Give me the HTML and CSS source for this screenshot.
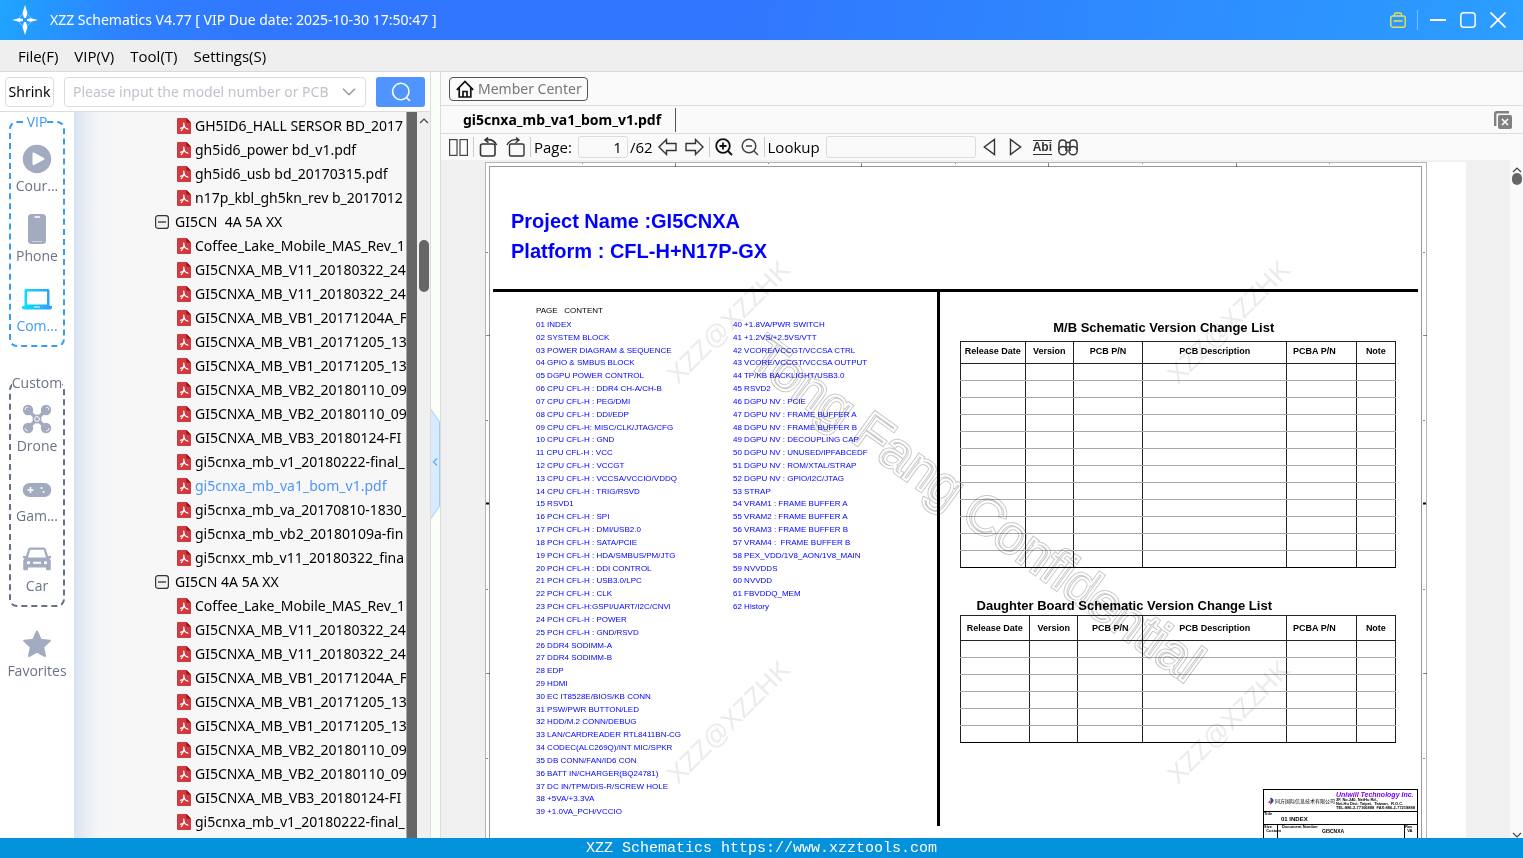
FILE: index.html
```html
<!DOCTYPE html>
<html lang="en">
<head>
<meta charset="utf-8">
<title>XZZ Schematics</title>
<link rel="stylesheet" href="styles.css">
</head>
<body>
<svg class="defs" aria-hidden="true">
  <symbol id="pdf" viewBox="0 0 14 16"><path d="M1 0H9.500L14 4.500V15a1 1 0 0 1-1 1H1a1 1 0 0 1-1-1V1a1 1 0 0 1 1-1z" fill="#d33a40"/><path d="M9.500 0L14 4.500H9.500z" fill="#8f1218"/><path d="M6.700 5.200c.3 2 .6 3.300 1.200 4.200.8 1 1.800 1.500 3 1.700M7.500 9c-1.600.2-2.900.7-4 1.300M6.900 6.500c0 2.300-.8 4.400-2.600 6" fill="none" stroke="#fff" stroke-width="1.200" stroke-linecap="round"/></symbol>
  <symbol id="minus" viewBox="0 0 14 14"><rect x=".6" y=".6" width="12.800" height="12.800" rx="2.500" fill="#f3f0f3" stroke="#333" stroke-width="1.200"/><path d="M3 7h8" stroke="#222" stroke-width="1.200"/></symbol>
</svg>
<div class="app">
  <header class="titlebar">
    <svg class="logo" viewBox="0 0 26 30"><circle cx="13" cy="15" r="6" fill="none" stroke="#7cc6ff" stroke-width="1"/><path d="M13 0l2.500 8-1.500 5h-2l-1.500-5zM13 30l2.500-8-1.500-5h-2l-1.500 5zM0 15l7-1.800 4 .8v2l-4 .8zM26 15l-7-1.800-4 .8v2l4 .8z" fill="#fff"/></svg>
    <h1 class="caption">XZZ Schematics V4.77 [ VIP Due date: 2025-10-30 17:50:47 ]</h1>
    <div class="window-tools">
      <button class="win" aria-label="Toolbox"><svg width="16" height="16" viewBox="0 0 16 16" fill="none" stroke="#e3e34c" stroke-width="1.400"><rect x=".8" y="4" width="14.400" height="11.200" rx="2"/><path d="M4.500 4V2.500A1.500 1.500 0 0 1 6 1h4a1.500 1.500 0 0 1 1.500 1.500V4M3.500 9h9"/></svg></button>
      <span class="win-sep"></span>
      <button class="win" aria-label="Minimize"><svg width="16" height="16" viewBox="0 0 16 16"><path d="M0 8h16" stroke="#fff" stroke-width="2"/></svg></button>
      <button class="win" aria-label="Maximize"><svg width="16" height="16" viewBox="0 0 16 16"><rect x=".8" y=".8" width="14.400" height="14.400" rx="3" fill="none" stroke="#fff" stroke-width="1.500"/></svg></button>
      <button class="win" aria-label="Close"><svg width="16" height="16" viewBox="0 0 16 16"><path d="M.5.5l15 15M15.500.5l-15 15" stroke="#fff" stroke-width="1.700"/></svg></button>
    </div>
  </header>
  <nav class="menubar">
    <button>File(F)</button><button>VIP(V)</button><button>Tool(T)</button><button>Settings(S)</button>
  </nav>
  <main class="main">
    <section class="left">
      <form class="search">
        <button class="shrink" type="button">Shrink</button>
        <div class="combo">
          <input type="text" aria-label="Model number or PCB" placeholder="Please input the model number or PCB">
          <svg width="14" height="8" viewBox="0 0 14 8"><path d="M1 .8l6 6 6-6" fill="none" stroke="#999" stroke-width="1.500"/></svg>
        </div>
        <button class="go" type="button" aria-label="Search"><svg width="20" height="20" viewBox="0 0 20 20" fill="none" stroke="#fff" stroke-width="1.600" stroke-linecap="round"><circle cx="9.800" cy="9.500" r="8.200"/><path d="M15.500 15.500l3 3"/></svg></button>
      </form>
      <div class="left-body">
        <nav class="rail">
          <fieldset class="group vip">
            <legend>VIP</legend>
            <button class="item"><svg viewBox="0 0 30 30"><circle cx="15" cy="15" r="14.200" fill="#a2abc0"/><path d="M10.500 9.500q0-1.500 1.400-.9l10 5.300q1.300.9 0 1.800l-10 5.300q-1.400.6-1.400-.9z" fill="#fff"/></svg>Cour...</button>
            <button class="item"><svg viewBox="0 0 30 30"><rect x="6" y="0" width="18" height="30" rx="3.500" fill="#a2abc0"/><path d="M13 3h4.500" stroke="#fff" stroke-width="1.400" stroke-linecap="round"/><path d="M10 27.500h10" stroke="#cdd3df"/></svg>Phone</button>
            <button class="item on"><svg viewBox="0 0 30 30"><defs><linearGradient id="lap"><stop offset="0" stop-color="#04e6fb"/><stop offset="1" stop-color="#2f9afa"/></linearGradient></defs><path fill="url(#lap)" fill-rule="evenodd" d="M4 5h22a1.500 1.500 0 0 1 1.500 1.500V22H30v1.500a2 2 0 0 1-2 2H2a2 2 0 0 1-2-2V22h2.500V6.500A1.500 1.500 0 0 1 4 5zM5 7.500V20.500H25V7.500zM12 22.500v1h6v-1z"/></svg>Com...</button>
          </fieldset>
          <fieldset class="group custom">
            <legend>Custom</legend>
            <button class="item"><svg viewBox="0 0 30 30"><g fill="#a2abc0"><circle cx="6" cy="6" r="5.200"/><circle cx="24" cy="6" r="5.200"/><circle cx="6" cy="24" r="5.200"/><circle cx="24" cy="24" r="5.200"/><circle cx="15" cy="15" r="4.500"/></g><g fill="none" stroke="#fff" stroke-width=".8"><path d="M3 6a3 3 0 0 1 3-3M27 6a3 3 0 0 0-3-3M3 24a3 3 0 0 0 3 3M27 24a3 3 0 0 1-3 3"/></g><path d="M6 6l18 18M24 6L6 24" stroke="#a2abc0" stroke-width="3.400" stroke-linecap="round"/><circle cx="15" cy="15" r="2.400" fill="none" stroke="#fff"/></svg>Drone</button>
            <button class="item"><svg viewBox="0 0 30 30"><rect x=".8" y="9" width="28.400" height="14" rx="6.500" fill="#a2abc0"/><path d="M5.500 16h6M8.500 13v6" stroke="#fff" stroke-width="1.500"/><circle cx="19.500" cy="14" r="1" fill="#fff"/><circle cx="21.500" cy="18" r="1" fill="#fff"/></svg>Gam...</button>
            <button class="item"><svg viewBox="0 0 30 30"><path fill="#a2abc0" fill-rule="evenodd" d="M8.500 3.500h13a2.500 2.500 0 0 1 2.400 1.800L26 12h3v2l-1.500.6q1.300 1.200 1.300 3V25a1.200 1.200 0 0 1-1.200 1.200h-2.400A1.200 1.200 0 0 1 24 25v-1.500H6V25a1.200 1.200 0 0 1-1.200 1.200H2.400A1.200 1.200 0 0 1 1.200 25v-7.400q0-1.800 1.300-3L1 14v-2h3l2.100-6.700A2.500 2.500 0 0 1 8.500 3.500zM8.300 5.700L6 13.500h18l-2.300-7.800zM6.500 17a1.600 1.600 0 1 0 0 3.300 1.600 1.600 0 0 0 0-3.300zM23.500 17a1.600 1.600 0 1 0 0 3.300 1.600 1.600 0 0 0 0-3.300zM11 17.700v2h8v-2z"/></svg>Car</button>
          </fieldset>
          <button class="item fav"><svg viewBox="0 0 30 30"><path d="M15 2.500l3.800 8.300 9 1-6.600 6.200 1.800 9L15 22.700 7 27l1.800-9-6.600-6.200 9-1z" fill="#a2abc0" stroke="#a2abc0" stroke-width="2" stroke-linejoin="round"/></svg>Favorites</button>
        </nav>
        <ul class="tree">
          <li class="file"><svg><use href="#pdf"/></svg>GH5ID6_HALL SERSOR BD_2017</li>
          <li class="file"><svg><use href="#pdf"/></svg>gh5id6_power bd_v1.pdf</li>
          <li class="file"><svg><use href="#pdf"/></svg>gh5id6_usb bd_20170315.pdf</li>
          <li class="file"><svg><use href="#pdf"/></svg>n17p_kbl_gh5kn_rev b_2017012</li>
          <li class="folder"><svg><use href="#minus"/></svg>GI5CN&nbsp; 4A 5A XX</li>
          <li class="file"><svg><use href="#pdf"/></svg>Coffee_Lake_Mobile_MAS_Rev_1</li>
          <li class="file"><svg><use href="#pdf"/></svg>GI5CNXA_MB_V11_20180322_24</li>
          <li class="file"><svg><use href="#pdf"/></svg>GI5CNXA_MB_V11_20180322_24</li>
          <li class="file"><svg><use href="#pdf"/></svg>GI5CNXA_MB_VB1_20171204A_F</li>
          <li class="file"><svg><use href="#pdf"/></svg>GI5CNXA_MB_VB1_20171205_13</li>
          <li class="file"><svg><use href="#pdf"/></svg>GI5CNXA_MB_VB1_20171205_13</li>
          <li class="file"><svg><use href="#pdf"/></svg>GI5CNXA_MB_VB2_20180110_09</li>
          <li class="file"><svg><use href="#pdf"/></svg>GI5CNXA_MB_VB2_20180110_09</li>
          <li class="file"><svg><use href="#pdf"/></svg>GI5CNXA_MB_VB3_20180124-FI</li>
          <li class="file"><svg><use href="#pdf"/></svg>gi5cnxa_mb_v1_20180222-final_</li>
          <li class="file open"><svg><use href="#pdf"/></svg>gi5cnxa_mb_va1_bom_v1.pdf</li>
          <li class="file"><svg><use href="#pdf"/></svg>gi5cnxa_mb_va_20170810-1830_</li>
          <li class="file"><svg><use href="#pdf"/></svg>gi5cnxa_mb_vb2_20180109a-fin</li>
          <li class="file"><svg><use href="#pdf"/></svg>gi5cnxx_mb_v11_20180322_fina</li>
          <li class="folder"><svg><use href="#minus"/></svg>GI5CN 4A 5A XX</li>
          <li class="file"><svg><use href="#pdf"/></svg>Coffee_Lake_Mobile_MAS_Rev_1</li>
          <li class="file"><svg><use href="#pdf"/></svg>GI5CNXA_MB_V11_20180322_24</li>
          <li class="file"><svg><use href="#pdf"/></svg>GI5CNXA_MB_V11_20180322_24</li>
          <li class="file"><svg><use href="#pdf"/></svg>GI5CNXA_MB_VB1_20171204A_F</li>
          <li class="file"><svg><use href="#pdf"/></svg>GI5CNXA_MB_VB1_20171205_13</li>
          <li class="file"><svg><use href="#pdf"/></svg>GI5CNXA_MB_VB1_20171205_13</li>
          <li class="file"><svg><use href="#pdf"/></svg>GI5CNXA_MB_VB2_20180110_09</li>
          <li class="file"><svg><use href="#pdf"/></svg>GI5CNXA_MB_VB2_20180110_09</li>
          <li class="file"><svg><use href="#pdf"/></svg>GI5CNXA_MB_VB3_20180124-FI</li>
          <li class="file"><svg><use href="#pdf"/></svg>gi5cnxa_mb_v1_20180222-final_</li>
        </ul>
        <div class="strip"></div>
        <div class="scroll tree-scroll">
          <svg width="10" height="6" viewBox="0 0 10 6"><path d="M1 5l4-4 4 4" fill="none" stroke="#444" stroke-width="1.200"/></svg>
          <span class="thumb"></span>
        </div>
      </div>
    </section>
    <div class="divider"><svg class="handle" width="9" height="110" viewBox="0 0 9 110"><path d="M0 .5L8.500 13v84L0 109.500" fill="#d9ebff" stroke="#9fcdfa"/><path d="M6 49.500L2.500 53 6 56.500" fill="none" stroke="#5aaef5" stroke-width="1.200"/></svg></div>
    <section class="right">
      <div class="member-row">
        <button class="member"><svg width="18" height="18" viewBox="0 0 18 18" fill="none" stroke="#111" stroke-width="1.700"><path d="M.8 9.800L9 1.500l8.200 8.300M3.200 8v9h11.600V8M7 17v-5.500h4V17"/></svg>Member Center</button>
      </div>
      <div class="tabs">
        <button class="tab">gi5cnxa_mb_va1_bom_v1.pdf</button>
        <button class="close-all" aria-label="Close all"><svg width="18" height="18" viewBox="0 0 18 18"><path d="M1.200 15V3a1.800 1.800 0 0 1 1.800-1.800h12" fill="none" stroke="#808080" stroke-width="2.400"/><rect x="4" y="4" width="14" height="14" rx="2" fill="#808080"/><path d="M8 8l6 6M14 8l-6 6" stroke="#fff" stroke-width="1.600"/></svg></button>
      </div>
      <div class="toolbar">
        <button aria-label="Two pages"><svg width="19" height="17" viewBox="0 0 19 17" fill="none" stroke="#444" stroke-width="1.200"><rect x=".6" y=".6" width="7.400" height="15.800"/><rect x="11" y=".6" width="7.400" height="15.800"/></svg></button>
        <span class="sep"></span>
        <button aria-label="Rotate left"><svg width="19" height="20" viewBox="0 0 19 20" fill="none" stroke="#333" stroke-width="1.600"><rect x="1.500" y="7" width="14.500" height="12" rx="2"/><path d="M6 3c5-1 9-.5 11.500 5M9 .5L6 3l3.500 2.700"/></svg></button>
        <button aria-label="Rotate right"><svg width="19" height="20" viewBox="0 0 19 20" fill="none" stroke="#333" stroke-width="1.400"><rect x="3.500" y="7" width="14.500" height="12" rx="1.500"/><path d="M13 3c-5-1-9-.5-12 5M10 .5L13 3 9.500 5.700"/></svg></button>
        <span class="sep"></span>
        <label class="page-label" for="page">Page:</label><input class="page-no" id="page" type="text" value="1"><span class="of">/62</span>
        <button aria-label="Previous page"><svg width="19" height="18" viewBox="0 0 19 18" fill="none" stroke="#333" stroke-width="1.400"><path d="M1 9l7.500-7.500v4H18v7H8.500v4z"/></svg></button>
        <button class="next" aria-label="Next page"><svg width="19" height="18" viewBox="0 0 19 18" fill="none" stroke="#333" stroke-width="1.400"><path d="M18 9l-7.500-7.500v4H1v7h9.500v4z"/></svg></button>
        <span class="sep"></span>
        <button class="zoom" aria-label="Zoom in"><svg width="18" height="18" viewBox="0 0 18 18" fill="none" stroke="#111" stroke-width="1.800"><circle cx="8" cy="8" r="6.800"/><path d="M13 13l4 4M4.500 8h7M8 4.500v7"/></svg></button>
        <button class="zoom" aria-label="Zoom out"><svg width="18" height="18" viewBox="0 0 18 18" fill="none" stroke="#444" stroke-width="1.500"><circle cx="8" cy="8" r="6.800"/><path d="M13 13l4 4M5 8h6"/></svg></button>
        <span class="sep"></span>
        <label class="lookup-label" for="lookup">Lookup</label><input class="lookup" id="lookup" type="text">
        <button class="tri" aria-label="Find previous"><svg width="13" height="18" viewBox="0 0 13 18"><path d="M11.500 1.500v15L1.300 9z" fill="none" stroke="#333" stroke-width="1.400"/></svg></button>
        <button class="tri" aria-label="Find next"><svg width="13" height="18" viewBox="0 0 13 18"><path d="M1.500 1.500v15L11.700 9z" fill="none" stroke="#333" stroke-width="1.400"/></svg></button>
        <button class="abi">Abi</button>
        <button aria-label="Search in files"><svg width="20" height="17" viewBox="0 0 20 17" fill="none" stroke="#333" stroke-width="1.500"><circle cx="4.900" cy="11.700" r="4.100"/><circle cx="15.100" cy="11.700" r="4.100"/><path d="M.9 11V5.500Q.9 1 4.500 1T8 4v8M19.100 11V5.500Q19.100 1 15.500 1T12 4v8M8 3.500h4M8 8h4"/></svg></button>
      </div>
      <div class="viewer">
        <div class="canvas">
          <article class="sheet">
            <div class="frame">
              <header class="project">
                <div>Project Name :GI5CNXA</div>
                <div>Platform : CFL-H+N17P-GX</div>
              </header>
              <div class="columns">
                <section class="contents">
                  <div class="contents-head">PAGE&nbsp;&nbsp; CONTENT</div>
                  <ol class="index">
                    <li>01 INDEX</li><li>02 SYSTEM BLOCK</li><li>03 POWER DIAGRAM &amp; SEQUENCE</li><li>04 GPIO &amp; SMBUS BLOCK</li><li>05 DGPU POWER CONTROL</li><li>06 CPU CFL-H : DDR4 CH-A/CH-B</li><li>07 CPU CFL-H : PEG/DMI</li><li>08 CPU CFL-H : DDI/EDP</li><li>09 CPU CFL-H: MISC/CLK/JTAG/CFG</li><li>10 CPU CFL-H : GND</li><li>11 CPU CFL-H : VCC</li><li>12 CPU CFL-H : VCCGT</li><li>13 CPU CFL-H : VCCSA/VCCIO/VDDQ</li><li>14 CPU CFL-H : TRIG/RSVD</li><li>15 RSVD1</li><li>16 PCH CFL-H : SPI</li><li>17 PCH CFL-H : DMI/USB2.0</li><li>18 PCH CFL-H : SATA/PCIE</li><li>19 PCH CFL-H : HDA/SMBUS/PM/JTG</li><li>20 PCH CFL-H : DDI CONTROL</li><li>21 PCH CFL-H : USB3.0/LPC</li><li>22 PCH CFL-H : CLK</li><li>23 PCH CFL-H:GSPI/UART/I2C/CNVi</li><li>24 PCH CFL-H : POWER</li><li>25 PCH CFL-H : GND/RSVD</li><li>26 DDR4 SODIMM-A</li><li>27 DDR4 SODIMM-B</li><li>28 EDP</li><li>29 HDMI</li><li>30 EC IT8528E/BIOS/KB CONN</li><li>31 PSW/PWR BUTTON/LED</li><li>32 HDD/M.2 CONN/DEBUG</li><li>33 LAN/CARDREADER RTL8411BN-CG</li><li>34 CODEC(ALC269Q)/INT MIC/SPKR</li><li>35 DB CONN/FAN/ID6 CON</li><li>36 BATT IN/CHARGER(BQ24781)</li><li>37 DC IN/TPM/DIS-R/SCREW HOLE</li><li>38 +5VA/+3.3VA</li><li>39 +1.0VA_PCH/VCCIO</li>
                    <li>40 +1.8VA/PWR SWITCH</li><li>41 +1.2VS/+2.5VS/VTT</li><li>42 VCORE/VCCGT/VCCSA CTRL</li><li>43 VCORE/VCCGT/VCCSA OUTPUT</li><li>44 TP/KB BACKLIGHT/USB3.0</li><li>45 RSVD2</li><li>46 DGPU NV : PCIE</li><li>47 DGPU NV : FRAME BUFFER A</li><li>48 DGPU NV : FRAME BUFFER B</li><li>49 DGPU NV : DECOUPLING CAP</li><li>50 DGPU NV : UNUSED/IPFABCEDF</li><li>51 DGPU NV : ROM/XTAL/STRAP</li><li>52 DGPU NV : GPIO/I2C/JTAG</li><li>53 STRAP</li><li>54 VRAM1 : FRAME BUFFER A</li><li>55 VRAM2 : FRAME BUFFER A</li><li>56 VRAM3 : FRAME BUFFER B</li><li>57 VRAM4 :&nbsp; FRAME BUFFER B</li><li>58 PEX_VDD/1V8_AON/1V8_MAIN</li><li>59 NVVDDS</li><li>60 NVVDD</li><li>61 FBVDDQ_MEM</li><li>62 History</li>
                  </ol>
                </section>
                <section class="changes">
                  <table class="log main-board">
                    <caption>M/B Schematic Version Change List</caption>
                    <colgroup><col class="c-date"><col class="c-ver"><col class="c-pn"><col class="c-desc"><col class="c-pcba"><col class="c-note"></colgroup>
                    <thead><tr><th>Release Date</th><th>Version</th><th>PCB P/N</th><th>PCB Description</th><th class="shifted">PCBA P/N</th><th>Note</th></tr></thead>
                    <tbody>
                      <tr><td></td><td></td><td></td><td></td><td></td><td></td></tr><tr><td></td><td></td><td></td><td></td><td></td><td></td></tr><tr><td></td><td></td><td></td><td></td><td></td><td></td></tr><tr><td></td><td></td><td></td><td></td><td></td><td></td></tr><tr><td></td><td></td><td></td><td></td><td></td><td></td></tr><tr><td></td><td></td><td></td><td></td><td></td><td></td></tr><tr><td></td><td></td><td></td><td></td><td></td><td></td></tr><tr><td></td><td></td><td></td><td></td><td></td><td></td></tr><tr><td></td><td></td><td></td><td></td><td></td><td></td></tr><tr><td></td><td></td><td></td><td></td><td></td><td></td></tr><tr><td></td><td></td><td></td><td></td><td></td><td></td></tr><tr><td></td><td></td><td></td><td></td><td></td><td></td></tr>
                    </tbody>
                  </table>
                  <table class="log daughter">
                    <caption>Daughter Board Schematic Version Change List</caption>
                    <colgroup><col class="c-date wide"><col class="c-ver"><col class="c-pn slim"><col class="c-desc"><col class="c-pcba"><col class="c-note"></colgroup>
                    <thead><tr><th>Release Date</th><th>Version</th><th>PCB P/N</th><th>PCB Description</th><th class="shifted">PCBA P/N</th><th>Note</th></tr></thead>
                    <tbody>
                      <tr><td></td><td></td><td></td><td></td><td></td><td></td></tr><tr><td></td><td></td><td></td><td></td><td></td><td></td></tr><tr><td></td><td></td><td></td><td></td><td></td><td></td></tr><tr><td></td><td></td><td></td><td></td><td></td><td></td></tr><tr><td></td><td></td><td></td><td></td><td></td><td></td></tr><tr><td></td><td></td><td></td><td></td><td></td><td></td></tr>
                    </tbody>
                  </table>
                  <div class="block">
                    <div class="company">
                      <svg width="6" height="8" viewBox="0 0 6 8"><path d="M2 .5q5 1.500 3 4.500-1 1.500-3 2.500 1.500-3 0-7z" fill="#234a9c"/><path d="M0 5.500L2.500 3v3.500z" fill="#d22"/></svg>
                      <span class="cn">同方国际信息技术有限公司</span>
                      <div class="addr"><b>Uniwill Technology Inc.</b><span>3F, No.240, NeiHu Rd.,</span><span>Nei-Hu Dist, Taipei,&nbsp; Taiwan,&nbsp; R.O.C.</span><span>TEL:886-2-77166888&nbsp; FAX:886-2-77218888</span></div>
                    </div>
                    <div class="block-title"><span>Title</span><b>01 INDEX</b></div>
                    <div class="block-doc"><span>Size<br>&nbsp; Custom</span><span>Document Number<b>GI5CNXA</b></span><span>Rev<br>&nbsp; VA</span></div>
                  </div>
                </section>
              </div>
            </div>
            <svg class="marks" aria-hidden="true">
              <g stroke="#888"><path d="M190.500 1v4M376.500 1v4M563.500 1v4M751.500 1v4M97.500 1v1M283.500 1v1M470.500 1v1M657.500 1v1M844.500 1v1M1 173.500h4M1 511.500h4M938 173.500h4M938 511.500h4M1 90.500h2M1 258.500h2M1 427.500h2M1 596.500h2M938 90.500h2M938 258.500h2M938 427.500h2M938 596.500h2"/></g>
              <path d="M1 341.500h3M938 341.500h3" stroke="#000" stroke-width="2"/>
              <g class="stamp"><text transform="translate(193 223) rotate(-45)">XZZ@XZZHK</text><text transform="translate(693 223) rotate(-45)">XZZ@XZZHK</text><text transform="translate(193 623) rotate(-45)">XZZ@XZZHK</text><text transform="translate(693 623) rotate(-45)">XZZ@XZZHK</text></g>
              <g class="confidential" transform="translate(260 201) rotate(36)"><text class="outer">Tong Fang Confidential</text><text class="inner">Tong Fang Confidential</text></g>
            </svg>
          </article>
        </div>
        <div class="scroll doc-scroll">
          <svg width="10" height="6" viewBox="0 0 10 6"><path d="M1 5l4-4 4 4" fill="none" stroke="#444" stroke-width="1.200"/></svg>
          <span class="thumb"></span>
          <svg class="down" width="10" height="6" viewBox="0 0 10 6"><path d="M1 1l4 4 4-4" fill="none" stroke="#444" stroke-width="1.200"/></svg>
        </div>
      </div>
    </section>
  </main>
  <footer class="footer">XZZ Schematics https://www.xzztools.com</footer>
</div>
</body>
</html>
```
FILE: styles.css
```css
* { box-sizing: border-box; }
body { margin: 0; font: 14px/20px "Noto Sans", "Open Sans", sans-serif; color: #000; }
button, input { font: inherit; color: inherit; }
button { border: 0; padding: 0; background: none; display: flex; align-items: center; justify-content: center; }
svg { flex: none; display: block; }
.defs { position: absolute; width: 0; height: 0; }
.app { height: 100vh; display: flex; flex-direction: column; overflow: hidden; background: #fafafa; }

.titlebar { height: 40px; flex: none; display: flex; align-items: center; padding: 0 16px 0 12px; color: #fff;
  background: linear-gradient(100deg, #1fa5ff 0, #2e80ff 130px, #3176fe 260px, #3176fe 48%, #2b9eff 100%); }
.logo { width: 26px; height: 30px; }
.caption { margin: 0 auto 0 12px; font-size: 14px; font-weight: 400; }
.window-tools { display: flex; align-items: center; }
.win { width: 30px; height: 30px; }
.win:last-child { margin-right: -6px; }
.win-sep { width: 1px; height: 20px; background: #7cbfff; margin: 0 5px 0 4px; }

.menubar { height: 32px; flex: none; display: flex; gap: 16px; padding: 0 18px; background: #efefef; border-bottom: 1px solid #d9d9d9; font-family: "Open Sans", sans-serif; font-size: 15px; }

.main { flex: 1; min-height: 0; display: flex; }
.left { width: 431px; flex: none; display: flex; flex-direction: column; border-right: 1px solid #dcdcdc; background: #fff; }
.search { height: 40px; flex: none; display: flex; align-items: center; gap: 10px; padding: 0 5px; border-bottom: 1px solid #dcdcdc; }
.shrink { width: 49px; height: 30px; border: 1px solid #dcdcdc; border-radius: 4px; }
.combo { flex: 1; min-width: 0; height: 30px; display: flex; align-items: center; padding: 0 9px 0 8px; border: 1px solid #dcdcdc; border-radius: 4px; }
.combo input { flex: 1; min-width: 0; border: 0; padding: 0; outline: 0; background: none; }
.combo input::placeholder { color: #bfc3ca; opacity: 1; }
.go { width: 49px; height: 30px; border-radius: 3px; background: #4f94ff; }

.left-body { flex: 1; min-height: 0; display: flex; overflow: hidden; }
.rail { width: 74px; flex: none; display: flex; flex-direction: column; align-items: center; font-family: "Open Sans", sans-serif; color: #6a7384; }
.group { width: 56px; margin: 0; min-width: 0; padding: 12px 0 9px; border: 2px dashed #66708a; border-radius: 8px; display: flex; flex-direction: column; gap: 18px; }
.group legend { margin: 0 auto; padding: 0; line-height: 20px; }
.vip { border-color: #3a9bf5; }
.vip legend { color: #3a9bf5; }
.custom { margin-top: 26px; padding-top: 11px; }
.item { flex-direction: column; gap: 2px; width: 100%; height: 52px; white-space: nowrap; }
.item svg { width: 30px; height: 30px; }
.item.on { color: #3a9bf5; }
.fav { margin-top: 22px; }

.tree { flex: 1; min-width: 0; margin: 0; padding: 2px 0 0; list-style: none; overflow: hidden;
  background: linear-gradient(90deg, #d8e2f2 0, #e9eef5 12px, #f4f6f7 25px, #f7f7f7 40px); }
.tree li { height: 24px; display: flex; align-items: center; white-space: pre; }
.tree svg { width: 14px; height: 16px; }
.file { padding-left: 103px; gap: 4px; }
.folder { padding-left: 81px; gap: 6px; }
.tree .folder svg { height: 14px; }
.open { color: #4f94ff; }
.strip { width: 11px; flex: none; background: #666; border-left: 1px solid #aaa; }
.scroll { width: 13px; flex: none; display: flex; flex-direction: column; align-items: center; background: #f0f0f0; }
.thumb { width: 10px; border-radius: 5px; background: #666; }
.tree-scroll { padding-top: 6px; }
.tree-scroll .thumb { height: 52px; margin-top: 116px; }

.divider { width: 9px; flex: none; background: #fafffa; display: flex; align-items: center; }
.handle { margin-top: 18px; }

.right { flex: 1; min-width: 0; display: flex; flex-direction: column; border-left: 1px solid #dcdcdc; }
.member-row { height: 34px; flex: none; display: flex; align-items: center; padding: 0 8px; border-bottom: 1px solid #dcdcdc; }
.member { height: 24px; gap: 4px; padding: 0 5px 0 6px; border: 1px solid #555; border-radius: 4px; color: #777; }
.tabs { height: 28px; flex: none; display: flex; align-items: center; justify-content: space-between; padding: 0 11px 0 8px; border-bottom: 1px solid #dcdcdc; }
.tab { height: 24px; padding: 0 14px; border-right: 1px solid #555; font-weight: 700; }
.toolbar { height: 26px; flex: none; display: flex; align-items: center; gap: 8px; padding: 0 8px; font-family: "Open Sans", sans-serif; font-size: 15px; }
.sep { width: 1px; height: 20px; margin: 0 -3px; background: #ccc; }
.page-label { margin: 0 -2px; }
.page-no { width: 50px; height: 22px; padding: 0 5px; text-align: right; border: 1px solid #dcdcdc; border-radius: 3px; background: #fafafa; }
.of { margin: 0 -3px 0 -6px; }
.lookup-label { margin: 0 -2px; }
.lookup { width: 150px; height: 22px; margin-right: -3px; border: 1px solid #dcdcdc; border-radius: 3px; background: #fafafa; }
.tri { width: 18px; }
.abi { height: 15px; margin-right: -2px; border: solid #333; border-width: 1px 0; font: 700 12px/12px "Liberation Sans", Arial, sans-serif; color: #333; }

.viewer { flex: 1; min-height: 0; display: flex; overflow: hidden; }
.canvas { flex: 1; min-width: 0; overflow: hidden; padding: 2px 44px 0; background: #f0f0f0; }
.doc-scroll { background: #fafafa; padding: 7px 0 0; }
.doc-scroll .thumb { height: 12px; }
.doc-scroll .down { margin-top: auto; }

.sheet { position: relative; height: 760px; padding: 4px 44px 4px 4px; background: #fff; font-family: "Liberation Sans", Arial, sans-serif; }
.sheet::before { content: ""; position: absolute; inset: 0 39px 0 0; border: 1px solid #b5b5b5; }
.frame { height: 100%; border: 1px solid #999; padding: 39px 3px 0; }
.project { padding-left: 18px; color: #00f; font-size: 20px; line-height: 30px; font-weight: 700; }
.columns { display: grid; grid-template-columns: 447fr 479fr; margin-top: 23px; border-top: 3px solid #000; }
.contents { height: 534px; border-right: 3px solid #000; padding: 12px 0 0 43px; font-size: 8px; }
.contents-head { line-height: 14px; }
.index { list-style: none; margin: 0; padding: 0; height: 500px; color: #00f; display: grid; grid-auto-flow: column; grid-template-rows: repeat(39, minmax(0, 1fr)); grid-template-columns: 197px 1fr; }
.index li { line-height: 13px; white-space: nowrap; }
.changes { display: flex; flex-direction: column; padding: 26px 22px 0 20px; }
.log { width: 100%; table-layout: fixed; border-collapse: collapse; border: 1px solid #000; font-size: 9px; }
.log caption { font-size: 13px; font-weight: 700; line-height: 20px; white-space: nowrap; }
.main-board caption { padding: 0 28px 3px 0; }
.main-board tbody tr { height: 17px; }
.daughter { margin-top: 28px; }
.daughter caption { text-align: left; padding-left: 17px; line-height: 19px; }
.daughter tbody tr { height: 17px; }
.log td, .log th { padding: 0; border: 1px solid #222; line-height: 12px; white-space: nowrap; }
.log td { border-bottom-color: #aaa; border-top-color: #aaa; }
.log tbody tr:first-child td { border-top-color: #333; }
.log tbody tr:last-child td { border-bottom-color: #000; }
.main-board th { height: 22px; padding-bottom: 3px; }
.daughter th { height: 25px; }
.log .shifted { padding-right: 14px; }
.c-date { width: 15%; }
.c-date.wide { width: 16%; }
.c-ver { width: 11%; }
.c-pn { width: 16%; }
.c-pn.slim { width: 15%; }
.c-desc { width: 33%; }
.c-pcba { width: 16%; }
.c-note { width: 9%; }

.block { align-self: flex-end; width: 155px; margin: 46px -22px 0 0; border: 1px solid #000; font-size: 4px; line-height: 4px; font-weight: 700; white-space: nowrap; }
.company { height: 21px; display: flex; align-items: center; gap: 1px; padding-left: 4px; }
.cn { font: 5px/8px "Noto Sans CJK SC", sans-serif; }
.addr { display: flex; flex-direction: column; }
.addr b { font-size: 7px; line-height: 7px; font-style: italic; color: #7a00ff; }
.block-title { height: 13px; border-top: 1px solid #000; }
.block-title b { display: block; font-size: 6px; line-height: 7px; padding-left: 17px; }
.block-doc { height: 14px; border-top: 1px solid #000; display: grid; grid-template-columns: 13px 1fr 13px; }
.block-doc span + span { border-left: 1px solid #000; padding-left: 4px; }
.block-doc span:last-child { padding-left: 0; }
.block-doc b { display: block; text-align: center; font-size: 5px; padding-right: 20px; }

.marks { position: absolute; left: 0; top: 0; width: 100%; height: 100%; mix-blend-mode: multiply; }
.stamp { font-size: 26px; fill: #ebebeb; }
.confidential { font-size: 53px; fill: none; }
.outer { stroke: #c8c8c8; stroke-width: 4px; }
.inner { stroke: #fff; stroke-width: 2px; }

.footer { height: 20px; flex: none; background: #0492dc; color: #fff; text-align: center; font: 15px/22px "Liberation Mono", monospace; }
```
